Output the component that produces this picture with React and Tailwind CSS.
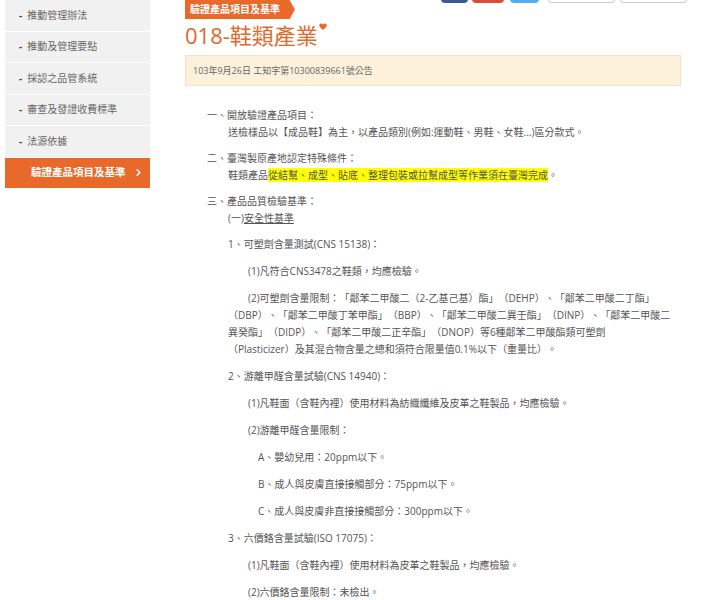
import React from "react";
import { ChevronRight } from "lucide-react";

const menu = [
  "推動管理辦法",
  "推動及管理要點",
  "採認之品管系統",
  "審查及發證收費標準",
  "法源依據",
];

const Heart = () => (
  <svg width="8" height="7" viewBox="0 0 10 9" className="ml-[1px] mt-[1px] self-start">
    <path
      d="M5 9 L1 5 C-0.5 3.5 0 0.5 2.5 0.5 C3.8 0.5 4.6 1.4 5 2.2 C5.4 1.4 6.2 0.5 7.5 0.5 C10 0.5 10.5 3.5 9 5 Z"
      fill="#e8692a"
    />
  </svg>
);

const Sidebar = () => (
  <div className="ml-[5px] w-[145px] shrink-0 flex flex-col self-start">
    {menu.map((item) => (
      <div
        key={item}
        className="h-[31.5px] shrink-0 bg-[#f1f1f1] border-b border-white flex items-center pl-[14px] text-[10px] text-[#666]"
      >
        <span className="text-[#444] font-bold mr-[5px]">-</span>
        {item}
      </div>
    ))}
    <div className="h-[30.5px] shrink-0 bg-[#e8692a] flex items-center justify-between pl-[26px] pr-[6px] text-[10.5px] text-white font-bold">
      驗證產品項目及基準
      <ChevronRight size={11} strokeWidth={3.5} />
    </div>
  </div>
);

const P = ({ className = "", children }) => (
  <p className={`leading-[17px] mb-[10px] ${className}`}>{children}</p>
);

const App = () => {
  return (
    <div
      className="w-[711px] h-[600px] overflow-hidden bg-white flex items-start [text-spacing-trim:space-all]"
      style={{ fontFamily: '"Open Sans", "Noto Sans CJK TC", sans-serif' }}
    >
      <Sidebar />

      <div className="ml-[35px] w-[502px] shrink-0">
        <div className="flex justify-between items-start h-[19px]">
          <div className="h-[19px] w-[110px] bg-[#e8692a] [clip-path:polygon(0_0,95%_0,100%_50%,95%_100%,0_100%)] flex items-center pl-[5px] text-[10px] text-white font-bold">
            驗證產品項目及基準
          </div>
          <div className="flex gap-[4px] -mt-[21px]">
            <div className="w-[27px] h-[24px] rounded-[4px] bg-[#3b5998]" />
            <div className="w-[32px] h-[24px] rounded-[4px] bg-[#dd4b39]" />
            <div className="w-[29px] h-[24px] rounded-[4px] bg-[#55acee] ml-[2px]" />
            <div className="w-[67px] h-[24px] rounded-[3px] border border-[#ccc] bg-white ml-[5px]" />
            <div className="w-[67px] h-[24px] rounded-[3px] border border-[#ccc] bg-white ml-[1px]" />
          </div>
        </div>

        <div className="flex items-start mt-[3px]">
          <h1 className="text-[22px] leading-[26px] text-[#e0692c]">
            018-鞋類產業
          </h1>
          <Heart />
        </div>

        <div className="mt-[7px] w-[496px] h-[31px] bg-[#fdf1dc] border border-[#f3e3c6] flex items-center pl-[7px] text-[9px] text-[#666]">
          103年9月26日 工知字第10300839661號公告
        </div>

        <div className="mt-[21px] text-[10px] text-[#555]">
          <div className="pl-[22px] leading-[16.5px] mb-[10px]">
            一、開放驗證產品項目：
            <div className="pl-[21px]">
              送檢樣品以【成品鞋】為主，以產品類別(例如:運動鞋、男鞋、女鞋...)區分款式。
            </div>
          </div>
          <div className="pl-[22px] leading-[16.5px] mb-[10px]">
            二、臺灣製原產地認定特殊條件：
            <div className="pl-[21px]">
              鞋類產品
              <span className="bg-[#ffff00]">
                從結幫、成型、貼底、整理包裝或拉幫成型等作業須在臺灣完成
              </span>
              。
            </div>
          </div>
          <div className="pl-[22px] leading-[16.5px] mb-[10px]">
            三、產品品質檢驗基準：
            <div className="pl-[21px]">
              (一)<span className="underline">安全性基準</span>
            </div>
          </div>

          <div className="pl-[43px]">
            <P>1、可塑劑含量測試(CNS 15138)：</P>
            <P className="pl-[20px]">(1)凡符合CNS3478之鞋類，均應檢驗。</P>
            <P className="whitespace-nowrap">
              <span className="block pl-[20px]">
                (2)可塑劑含量限制：「鄰苯二甲酸二（2-乙基己基）酯」（DEHP）、「鄰苯二甲酸二丁酯」
              </span>
              <span className="block">
                （DBP）、「鄰苯二甲酸丁苯甲酯」（BBP）、「鄰苯二甲酸二異壬酯」（DINP）、「鄰苯二甲酸二
              </span>
              <span className="block">
                異癸酯」（DIDP）、「鄰苯二甲酸二正辛酯」（DNOP）等6種鄰苯二甲酸酯類可塑劑
              </span>
              <span className="block">
                （Plasticizer）及其混合物含量之總和須符合限量值0.1%以下（重量比）。
              </span>
            </P>
            <P>2、游離甲醛含量試驗(CNS 14940)：</P>
            <P className="pl-[20px]">
              (1)凡鞋面（含鞋內裡）使用材料為紡織纖維及皮革之鞋製品，均應檢驗。
            </P>
            <P className="pl-[20px]">(2)游離甲醛含量限制：</P>
            <P className="pl-[30px]">A、嬰幼兒用：20ppm以下。</P>
            <P className="pl-[30px]">B、成人與皮膚直接接觸部分：75ppm以下。</P>
            <P className="pl-[30px]">C、成人與皮膚非直接接觸部分：300ppm以下。</P>
            <P>3、六價鉻含量試驗(ISO 17075)：</P>
            <P className="pl-[20px]">
              (1)凡鞋面（含鞋內裡）使用材料為皮革之鞋製品，均應檢驗。
            </P>
            <P className="pl-[20px]">(2)六價鉻含量限制：未檢出。</P>
          </div>
        </div>
      </div>
    </div>
  );
};

export default App;
